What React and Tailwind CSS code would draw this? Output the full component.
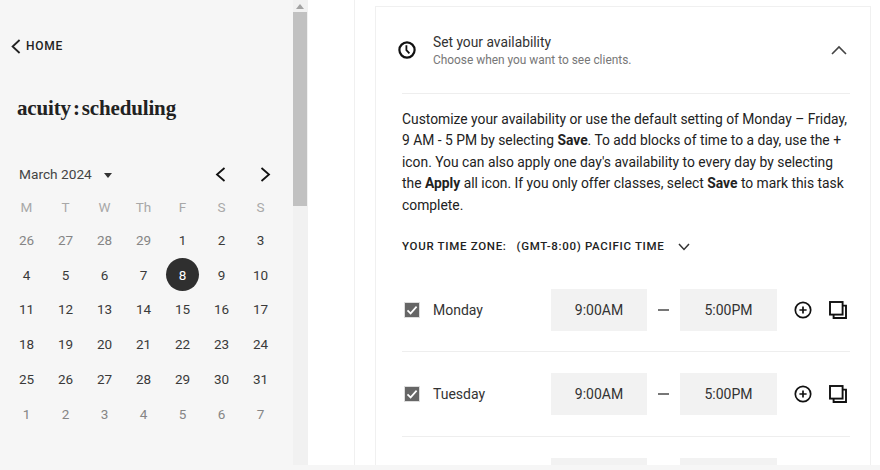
// Calendar data, first and last rows belong to the neighbouring months
const WEEK_DAYS = ['M', 'T', 'W', 'Th', 'F', 'S', 'S']
const CALENDAR = [
  [[26, 1], [27, 1], [28, 1], [29, 1], [1], [2], [3]],
  [[4], [5], [6], [7], [8], [9], [10]],
  [[11], [12], [13], [14], [15], [16], [17]],
  [[18], [19], [20], [21], [22], [23], [24]],
  [[25], [26], [27], [28], [29], [30], [31]],
  [[1, 1], [2, 1], [3, 1], [4, 1], [5, 1], [6, 1], [7, 1]],
]

function Chevron({ d, w, h, color = '#111111', width = 1.8 }) {
  return (
    <svg width={w} height={h} viewBox={`0 0 ${w} ${h}`} fill="none" stroke={color} strokeWidth={width} className="shrink-0">
      <path d={d} />
    </svg>
  )
}

function ClockIcon() {
  return (
    <svg width="20" height="20" viewBox="0 0 20 20" fill="none" stroke="#111" strokeWidth="2.2" className="shrink-0">
      <circle cx="10" cy="10" r="7.6" />
      <path d="M9.4 5.2V10.2L12.4 13.4" strokeWidth="1.8" />
    </svg>
  )
}

function PlusIcon() {
  return (
    <svg width="18" height="18" viewBox="0 0 18 18" fill="none" stroke="#111" className="shrink-0">
      <circle cx="9" cy="9" r="7.7" strokeWidth="1.7" />
      <path d="M5.4 9H12.6M9 5.4V12.6" strokeWidth="1.7" />
    </svg>
  )
}

function CopyIcon() {
  return (
    <svg width="18" height="18" viewBox="0 0 18 18" fill="none" stroke="#111" strokeWidth="1.9" className="shrink-0">
      <rect x="1" y="1" width="12.6" height="12.6" />
      <path d="M13.6 4.6H17V17H4.6V13.6" />
    </svg>
  )
}

function CheckBox() {
  return (
    <div className="w-4 h-4 bg-[#666666] border border-[#dddddd] flex items-center justify-center shrink-0">
      <svg width="12" height="12" viewBox="0 0 12 12" fill="none" stroke="#ffffff" strokeWidth="1.7">
        <path d="M1.5 6.4L4.6 9.4L10.6 2.6" />
      </svg>
    </div>
  )
}

function DayRow({ day }) {
  return (
    <div className="h-[84.4px] pt-[21px] border-b border-[#eeeeee] flex items-start">
      <div className="h-[42px] w-[149px] pl-[2px] flex items-center gap-[13px] shrink-0">
        <CheckBox />
        <span className="text-[14px] text-[#333333]">{day}</span>
      </div>
      <div className="w-[96px] h-[42px] bg-[#f2f2f2] flex items-center justify-center text-[14px] text-[#333333]">9:00AM</div>
      <div className="w-[33px] h-[42px] flex items-center justify-center">
        <div className="w-[11px] h-[2px] bg-[#777777]" />
      </div>
      <div className="w-[97px] h-[42px] bg-[#f2f2f2] flex items-center justify-center text-[14px] text-[#333333]">5:00PM</div>
      <div className="h-[42px] pl-[17px] flex items-center gap-[17px]">
        <PlusIcon />
        <CopyIcon />
      </div>
    </div>
  )
}

// third row is cut by the bottom of the panel, only the tops of the time boxes show
function PartialRow() {
  return (
    <div className="pt-[21px] pl-[149px] flex items-start">
      <div className="w-[96px] h-[42px] bg-[#f2f2f2]" />
      <div className="w-[33px]" />
      <div className="w-[97px] h-[42px] bg-[#f2f2f2]" />
    </div>
  )
}

function Sidebar() {
  return (
    <aside className="w-[293px] shrink-0 bg-[#f6f6f6] pt-[38px]">
      <div className="flex items-center pl-[11px] h-[16px]">
        <Chevron w={10} h={15} d="M8.6 1L1.6 7.5L8.6 14" color="#222222" width={1.8} />
        <span className="ml-[5px] text-[12px] font-medium tracking-[0.06em] text-[#222222]">HOME</span>
      </div>

      <div className="mt-[39px] pl-[17px] h-[30px] font-['Liberation_Serif',serif] text-[21px] leading-[30px] font-bold text-[#222222] tracking-[-0.15px]">
        acuity<span className="mx-[2px]">:</span>scheduling
      </div>

      <div className="mt-[39px] pl-[19px] pr-[22px] h-[24px] flex items-center">
        <span className="text-[13.7px] text-[#444444]">March 2024</span>
        <svg width="8" height="5" viewBox="0 0 8 5" className="ml-[12px] mt-[2px]">
          <path d="M0 0H8L4 5Z" fill="#333333" />
        </svg>
        <div className="ml-auto flex items-center gap-[34px]">
          <Chevron w={11} h={15} d="M9.5 1L2 7.5L9.5 14" />
          <Chevron w={11} h={15} d="M1.5 1L9 7.5L1.5 14" />
        </div>
      </div>

      <div className="mt-[11px] ml-[7px] grid grid-cols-[repeat(7,39px)]">
        {WEEK_DAYS.map((d, i) => (
          <div key={i} className="h-[20px] flex items-center justify-center text-[13.5px] text-[#a8a8a8]">{d}</div>
        ))}
      </div>

      <div className="mt-[5.5px] ml-[7px] grid grid-cols-[repeat(7,39px)] auto-rows-[34.8px]">
        {CALENDAR.flat().map(([n, muted], i) => (
          <div key={i} className="flex items-center justify-center">
            {n === 8 && !muted ? (
              <div className="w-[33px] h-[33px] rounded-full bg-[#2f2f2f] text-white text-[13.5px] flex items-center justify-center">{n}</div>
            ) : (
              <span className={`text-[13.5px] ${muted ? 'text-[#858585]' : 'text-[#3a3a3a]'}`}>{n}</span>
            )}
          </div>
        ))}
      </div>
    </aside>
  )
}

function ScrollBar() {
  return (
    <div className="w-[15px] shrink-0 h-[465px] bg-[#f1f1f1]">
      <div className="h-[12px] flex items-center justify-center pr-[2px]">
        <svg width="8" height="5" viewBox="0 0 8 5">
          <path d="M4 0L8 5H0Z" fill="#a3a3a3" />
        </svg>
      </div>
      <div className="w-[14px] h-[194px] bg-[#c1c1c1]" />
    </div>
  )
}

export default function App() {
  return (
    <div className="w-[880px] h-[470px] overflow-hidden flex bg-[#f6f6f6] font-['Roboto',sans-serif]">
      <Sidebar />
      <ScrollBar />
      <main className="flex-1 h-[465px] overflow-hidden bg-white pl-[46px]">
        <div className="h-full border-l border-[#f0f0f0] pl-[20px] pt-[6px]">
          <div className="w-[496px] border border-[#f0f0f0] pl-[26px] pr-[20px]">
            <div className="h-[87px] border-b border-[#eeeeee] flex items-center">
              <div className="-ml-[5px]">
                <ClockIcon />
              </div>
              <div className="ml-[16px]">
                <div className="text-[13.8px] leading-[20px] text-[#333333]">Set your availability</div>
                <div className="text-[11.9px] leading-[16px] text-[#777777]">Choose when you want to see clients.</div>
              </div>
              <div className="ml-auto mr-[3px]">
                <Chevron w={16} h={10} d="M1 9L8 2L15 9" color="#444444" width={1.6} />
              </div>
            </div>

            <p className="mt-[15px] text-[13.85px] leading-[21.4px] text-[#222222] whitespace-nowrap">
              Customize your availability or use the default setting of Monday – Friday,<br />
              9 AM - 5 PM by selecting <b>Save</b>. To add blocks of time to a day, use the +<br />
              icon. You can also apply one day's availability to every day by selecting<br />
              the <b>Apply</b> all icon. If you only offer classes, select <b>Save</b> to mark this task<br />
              complete.
            </p>

            <div className="mt-[21px] h-[20px] flex items-center text-[11.5px] font-medium tracking-[0.06em] text-[#222222]">
              <span>YOUR TIME ZONE:</span>
              <span className="ml-[10px]">(GMT-8:00) PACIFIC TIME</span>
              <div className="ml-[13px]">
                <Chevron w={12} h={8} d="M1 1L6 6.5L11 1" color="#333333" width={1.5} />
              </div>
            </div>

            <div className="mt-[11px]">
              <DayRow day="Monday" />
              <DayRow day="Tuesday" />
              <PartialRow />
            </div>
          </div>
        </div>
      </main>
    </div>
  )
}
